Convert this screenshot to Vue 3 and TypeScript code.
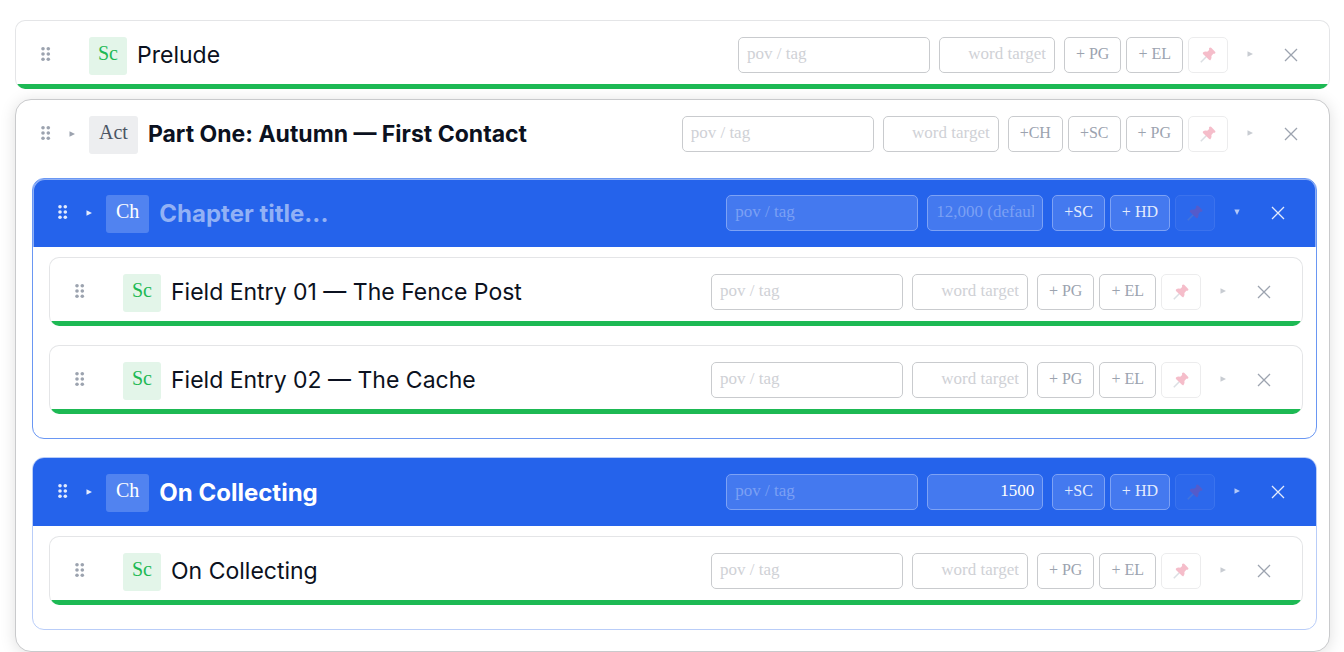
<script setup lang="ts">
import { defineComponent, h, ref, type PropType, type VNode } from 'vue'

type Kind = 'scene' | 'act' | 'chapter'

interface Item {
  id: string
  kind: Kind
  badge: string
  title: string
  pov: string
  target: string
  targetHint: string
  actions: string[]
  expanded?: boolean
  selected?: boolean
  children?: Item[]
}

const scene = (id: string, title: string): Item => ({
  id,
  kind: 'scene',
  badge: 'Sc',
  title,
  pov: '',
  target: '',
  targetHint: 'word target',
  actions: ['+ PG', '+ EL'],
})

const outline = ref<Item[]>([
  scene('s0', 'Prelude'),
  {
    id: 'a1',
    kind: 'act',
    badge: 'Act',
    title: 'Part One: Autumn — First Contact',
    pov: '',
    target: '',
    targetHint: 'word target',
    actions: ['+CH', '+SC', '+ PG'],
    children: [
      {
        id: 'c1',
        kind: 'chapter',
        badge: 'Ch',
        title: '',
        pov: '',
        target: '',
        targetHint: '12,000 (default)',
        actions: ['+SC', '+ HD'],
        expanded: true,
        selected: true,
        children: [
          scene('s1', 'Field Entry 01 — The Fence Post'),
          scene('s2', 'Field Entry 02 — The Cache'),
        ],
      },
      {
        id: 'c2',
        kind: 'chapter',
        badge: 'Ch',
        title: 'On Collecting',
        pov: '',
        target: '1500',
        targetHint: '12,000 (default)',
        actions: ['+SC', '+ HD'],
        children: [scene('s3', 'On Collecting')],
      },
    ],
  },
])

const svg = (cls: string, box: string, kids: VNode[]) =>
  h('svg', { class: cls, viewBox: box, 'aria-hidden': 'true' }, kids)

const RIGHT = 'M0.5 0.3 6 3 0.5 5.7z'
const DOWN = 'M0.3 0.5 5.7 0.5 3 6z'

const OutlineCard = defineComponent({
  name: 'OutlineCard',
  props: { item: { type: Object as PropType<Item>, required: true } },
  setup(props) {
    const textInput = (cls: string, key: 'title' | 'pov' | 'target', placeholder: string, label: string) =>
      h('input', {
        class: cls,
        type: 'text',
        value: props.item[key],
        placeholder,
        'aria-label': label,
        onInput: (e: Event) => {
          props.item[key] = (e.target as HTMLInputElement).value
        },
      })

    return (): VNode => {
      const it = props.item
      const dots = [2, 7.3].flatMap((cx) => [1.8, 7, 12.2].map((cy) => h('circle', { cx, cy, r: 1.8 })))
      const row = h('div', { class: 'row' }, [
        h('button', { class: 'handle', 'aria-label': 'Drag to reorder' }, [svg('dots', '0 0 10 14', dots)]),
        it.kind === 'scene'
          ? h('span', { class: 'fold' })
          : h('button', { class: 'fold', 'aria-label': 'Collapse' }, [svg('tri', '0 0 6 6', [h('path', { d: RIGHT })])]),
        h('span', { class: 'badge' }, it.badge),
        textInput('title', 'title', 'Chapter title...', 'Title'),
        textInput('field pov', 'pov', 'pov / tag', 'Point of view or tag'),
        textInput('field target', 'target', it.targetHint, 'Word target'),
        h('div', { class: 'actions' }, [
          ...it.actions.map((a) => h('button', { class: 'add', key: a }, a)),
          h('button', { class: 'add pin', 'aria-label': 'Pin' }, [
            svg('pin-icon', '0 0 16 16', [
              h('path', { d: 'M6.3 9.7 0.8 15.2', class: 'needle' }),
              h('path', {
                class: 'head',
                d: 'M9.2 0.9 Q10.6 0 11.4 1.1 L15 4.7 Q16 5.7 15 6.4 Q14.2 7 13.3 6.8 L11.4 8.9 Q12 11.6 10.6 13 Q9.8 13.6 9 12.8 L3 6.9 Q2.4 6 3.3 5.3 Q4.8 4.2 7.2 4.8 L9.2 2.9 Q8.7 1.7 9.2 0.9z',
              }),
            ]),
          ]),
        ]),
        h('button', { class: 'more', 'aria-label': 'Details' }, [
          svg('tri', '0 0 6 6', [h('path', { d: it.expanded ? DOWN : RIGHT })]),
        ]),
        h('button', { class: 'remove', 'aria-label': 'Remove' }, [
          svg('cross', '0 0 14 14', [h('path', { d: 'M1 1 13 13M13 1 1 13' })]),
        ]),
      ])
      return h('section', { class: ['card', it.kind, { selected: it.selected }] }, [
        row,
        it.kind === 'scene'
          ? h('div', { class: 'bar' })
          : h('div', { class: 'children' }, (it.children ?? []).map((c) => h(OutlineCard, { item: c, key: c.id }))),
      ])
    }
  },
})
</script>

<template>
  <main class="outline">
    <OutlineCard v-for="item in outline" :key="item.id" :item="item" />
  </main>
</template>

<style scoped>
.outline {
  display: flex;
  flex-direction: column;
  gap: 10px;
  padding: 20px 14px 0 15px;
}
</style>

<style>
body {
  background: #fff;
}
.outline,
.outline * {
  box-sizing: border-box;
}
.outline button,
.outline input {
  margin: 0;
  padding: 0;
  border: 0;
  background: none;
  color: inherit;
  font: inherit;
  outline: none;
}
.outline svg {
  display: block;
}
.outline .card {
  --ink: #0b1120;
  --muted: #9ca3af;
  --faint: #c8ccd2;
  --hint: #cfd1d6;
  --line: #c9cbce;
  --fill: #fff;
  font-family: "Liberation Serif", serif;
  border: 1px solid #e4e5e7;
  border-radius: 10px;
  background: #fff;
  overflow: hidden;
}
.outline .scene {
  border-bottom: 0;
}
.outline .act {
  border-color: #c9cacc;
  border-radius: 16px;
  box-shadow: 0 2px 16px rgba(0, 0, 0, 0.13);
}
.outline .chapter {
  border-color: #b9cdf8;
  border-radius: 12px;
}
.outline .selected {
  border-color: #6a97f3;
}
.outline .row {
  display: flex;
  align-items: flex-start;
  padding: 16px 27px 9px 25px;
  color: var(--ink);
}
.outline .act > .row {
  padding-bottom: 24px;
}
.outline .chapter > .row {
  --ink: #fff;
  --muted: #e3ebfd;
  --faint: #b3c9f8;
  --hint: #7ba0f4;
  --line: #7da2f5;
  --fill: #4479ef;
  padding-bottom: 14px;
  background: #2563eb;
}
.outline .selected > .row {
  border-radius: 11px 11px 0 0;
  box-shadow: inset 1px 1px #8fb0f6, inset -1px 0 #8fb0f6;
}
.outline .handle,
.outline .fold,
.outline .more,
.outline .remove {
  display: flex;
  align-items: center;
  justify-content: center;
  flex: none;
  height: 36px;
  color: var(--muted);
}
.outline .handle {
  width: 10px;
  height: 34px;
}
.outline .dots {
  width: 10px;
  height: 14px;
  fill: currentColor;
}
.outline .fold {
  width: 20px;
  margin: 0 7px 0 11px;
}
.outline .tri {
  width: 6px;
  height: 6px;
  fill: currentColor;
}
.outline .badge {
  flex: none;
  height: 38px;
  padding: 0 10px;
  border-radius: 3px;
  background: #edeef0;
  color: #4b5563;
  font-size: 20px;
  line-height: 32px;
}
.outline .scene > .row .badge {
  padding: 0 9px;
  background: #e3f5e9;
  color: #1db954;
}
.outline .chapter > .row .badge {
  background: #5183f0;
  color: #fff;
}
.outline .row .title {
  flex: 1 1 0;
  min-width: 0;
  height: 36px;
  margin: 0 10px;
  font-family: Inter, sans-serif;
  font-size: 23px;
}
.outline .act > .row .title {
  font-weight: 700;
}
.outline .chapter > .row .title {
  font-size: 24px;
  font-weight: 700;
}
.outline .title::placeholder {
  color: #92b1f5;
  opacity: 1;
}
.outline .row .field {
  flex: none;
  height: 36px;
  margin-right: 9px;
  padding: 0 8px 2px;
  border: 1px solid var(--line);
  border-radius: 5px;
  background: var(--fill);
  font-size: 17px;
}
.outline .field::placeholder {
  color: var(--hint);
  opacity: 1;
}
.outline .pov {
  width: 192px;
}
.outline .target {
  width: 116px;
  text-align: right;
}
.outline .actions {
  display: flex;
  flex: none;
  gap: 5px;
}
.outline .actions .add {
  height: 36px;
  padding: 0 11px 2px;
  border: 1px solid var(--line);
  border-radius: 5px;
  background: var(--fill);
  color: var(--muted);
  font-size: 16px;
}
.outline .actions .pin {
  width: 40px;
  padding: 0 11px;
  opacity: 0.35;
}
.outline .chapter > .row .pin {
  opacity: 0.25;
}
.outline .chapter .scene > .row .pin {
  opacity: 0.35;
}
.outline .pin-icon {
  width: 16px;
  height: 16px;
}
.outline .needle {
  fill: none;
  stroke: #9aa5b1;
  stroke-width: 1.5;
}
.outline .head {
  fill: #e4446a;
}
.outline .more {
  width: 20px;
  height: 34px;
  margin: 0 20px 0 12px;
  color: var(--faint);
}
.outline .remove {
  width: 22px;
}
.outline .cross {
  width: 14px;
  height: 14px;
  fill: none;
  stroke: currentColor;
  stroke-width: 1.3;
}
.outline .bar {
  height: 5px;
  background: #1db954;
}
.outline .children {
  display: flex;
  flex-direction: column;
}
.outline .act > .children {
  gap: 18px;
  padding: 0 12px 21px 16px;
}
.outline .chapter > .children {
  gap: 19px;
  padding: 10px 13px 24px 16px;
}
</style>
